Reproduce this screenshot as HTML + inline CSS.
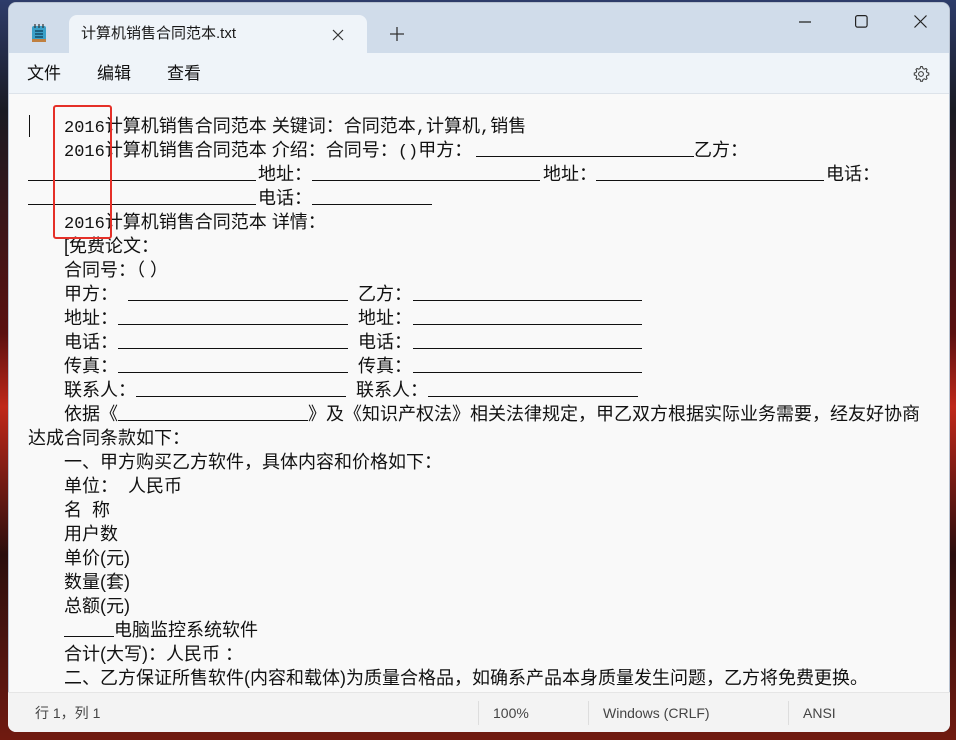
<!DOCTYPE html>
<html><head><meta charset="utf-8"><style>
*{margin:0;padding:0;box-sizing:border-box}
body{width:956px;height:740px;overflow:hidden;background:#1b2233;position:relative;font-family:"Liberation Sans","Noto Sans CJK SC",sans-serif;color:#111}
.desk{position:absolute;left:0;top:0;width:956px;height:740px;background:linear-gradient(180deg,#2d3c6a 0%,#1a1a22 15%,#5a1010 45%,#c0281a 55%,#2a0e0e 75%,#701a10 100%)}
.win{position:absolute;left:8px;top:2px;width:942px;height:730px;background:#f9f9f9;border-radius:8px;overflow:hidden;border:1px solid #b8c2d0}
.title{position:absolute;left:0;top:0;width:100%;height:50px;background:#d0dcea}
.tab{position:absolute;left:60px;top:12px;width:298px;height:40px;background:#eff4f9;border-radius:8px 8px 0 0;font-size:15px;line-height:38px;padding-left:12px;color:#1a1a1a}
.menu{position:absolute;left:0;top:50px;width:100%;height:41px;background:#eff4f9;border-bottom:1px solid #dde3ea;font-size:17px;line-height:42px}
.menu span{position:absolute}
.sep{position:absolute;top:8px;width:1px;height:24px;background:#ddd}
.l{position:absolute;font-size:18px;line-height:24px;white-space:pre;height:24px}
.r{position:absolute;left:0;top:0;width:956px;height:24px}
.r span,.r i{position:absolute;top:0;font-style:normal;font-size:18px;line-height:24px;white-space:pre}
.u{display:inline-block;border-bottom:1px solid #111;height:19px}
.r i.u{height:19px}
m{font-family:"Liberation Mono",monospace;font-size:17px}
</style></head><body>
<div class="desk"></div>
<div class="win">
 <div class="title">
  <svg style="position:absolute;left:22px;top:20px" width="16" height="20" viewBox="0 0 16 20"><rect x="1" y="3" width="14" height="16" rx="2" fill="#3aa0c8"/><rect x="1" y="16" width="14" height="3" fill="#c08040"/><path d="M4 8h8M4 11h8M4 14h8" stroke="#0b3a55" stroke-width="1.3"/><path d="M4 1v4M8 1v4M12 1v4" stroke="#333" stroke-width="1.2"/></svg>
  <div class="tab">计算机销售合同范本.txt
   <svg style="position:absolute;left:263px;top:14px" width="12" height="12"><path d="M1 1L11 11M11 1L1 11" stroke="#333" stroke-width="1.2"/></svg>
  </div>
  <svg style="position:absolute;left:381px;top:24px" width="14" height="14"><path d="M7 0v14M0 7h14" stroke="#333" stroke-width="1.3"/></svg>
  <svg style="position:absolute;left:790px;top:18px" width="12" height="2"><path d="M0 1h12" stroke="#222" stroke-width="1.2"/></svg>
  <svg style="position:absolute;left:846px;top:12px" width="13" height="13"><rect x=".6" y=".6" width="11.5" height="11.5" rx="2" fill="none" stroke="#222" stroke-width="1.2"/></svg>
  <svg style="position:absolute;left:905px;top:12px" width="13" height="13"><path d="M.5 .5L12.5 12.5M12.5 .5L.5 12.5" stroke="#222" stroke-width="1.2"/></svg>
 </div>
 <div class="menu"><span style="left:18px">文件</span><span style="left:88px">编辑</span><span style="left:158px">查看</span>
  <svg style="position:absolute;left:903px;top:12px" width="18" height="18" viewBox="0 0 24 24"><path d="M12 2l2 .3.6 2.4 1.8.9 2.3-1 1.4 1.4-1 2.3.9 1.8 2.4.6v2.6l-2.4.6-.9 1.8 1 2.3-1.4 1.4-2.3-1-1.8.9-.6 2.4h-2.6l-.6-2.4-1.8-.9-2.3 1-1.4-1.4 1-2.3-.9-1.8-2.4-.6v-2.6l2.4-.6.9-1.8-1-2.3 1.4-1.4 2.3 1 1.8-.9.6-2.4z" fill="none" stroke="#333" stroke-width="1.3"/><circle cx="12" cy="12" r="3.2" fill="none" stroke="#333" stroke-width="1.3"/></svg>
 </div>
 <div style="position:absolute;left:20px;top:112px;width:1px;height:22px;background:#111"></div>
</div>
<div class="l" style="left:64px;top:114px"><m>2016</m>计算机销售合同范本 关键词：合同范本<m>,</m>计算机<m>,</m>销售</div>
<div class="r" style="top:138px"><span style="left:64px"><m>2016</m>计算机销售合同范本 介绍：合同号：<m>()</m>甲方：</span><i class="u" style="left:476px;width:218px"></i><span style="left:694px">乙方：</span></div>
<div class="r" style="top:162px"><i class="u" style="left:28px;width:228px"></i><span style="left:258px">地址：</span><i class="u" style="left:312px;width:228px"></i><span style="left:543px">地址：</span><i class="u" style="left:596px;width:228px"></i><span style="left:826px">电话：</span></div>
<div class="r" style="top:186px"><i class="u" style="left:28px;width:228px"></i><span style="left:258px">电话：</span><i class="u" style="left:312px;width:120px"></i></div>
<div class="l" style="left:64px;top:210px"><m>2016</m>计算机销售合同范本 详情：</div>
<div class="l" style="left:64px;top:234px">[免费论文：</div>
<div class="l" style="left:64px;top:258px">合同号：（ ）</div>
<div class="r" style="top:282px"><span style="left:64px">甲方：</span><i class="u" style="left:128px;width:220px"></i><span style="left:358px">乙方：</span><i class="u" style="left:413px;width:229px"></i></div>
<div class="r" style="top:306px"><span style="left:64px">地址：</span><i class="u" style="left:118px;width:230px"></i><span style="left:358px">地址：</span><i class="u" style="left:413px;width:229px"></i></div>
<div class="r" style="top:330px"><span style="left:64px">电话：</span><i class="u" style="left:118px;width:230px"></i><span style="left:358px">电话：</span><i class="u" style="left:413px;width:229px"></i></div>
<div class="r" style="top:354px"><span style="left:64px">传真：</span><i class="u" style="left:118px;width:230px"></i><span style="left:358px">传真：</span><i class="u" style="left:413px;width:229px"></i></div>
<div class="r" style="top:378px"><span style="left:64px">联系人：</span><i class="u" style="left:136px;width:210px"></i><span style="left:356px">联系人：</span><i class="u" style="left:428px;width:210px"></i></div>
<div class="r" style="top:402px"><span style="left:64px">依据《</span><i class="u" style="left:118px;width:190px"></i><span style="left:308px">》及《知识产权法》相关法律规定，甲乙双方根据实际业务需要，经友好协商</span></div>
<div class="l" style="left:28px;top:426px">达成合同条款如下：</div>
<div class="l" style="left:64px;top:450px">一、甲方购买乙方软件，具体内容和价格如下：</div>
<div class="l" style="left:64px;top:474px">单位：  人民币</div>
<div class="l" style="left:64px;top:498px">名  称</div>
<div class="l" style="left:64px;top:522px">用户数</div>
<div class="l" style="left:64px;top:546px">单价(元)</div>
<div class="l" style="left:64px;top:570px">数量(套)</div>
<div class="l" style="left:64px;top:594px">总额(元)</div>
<div class="r" style="top:618px"><i class="u" style="left:64px;width:50px"></i><span style="left:114px">电脑监控系统软件</span></div>
<div class="l" style="left:64px;top:642px">合计(大写)：人民币 ：</div>
<div class="l" style="left:64px;top:666px">二、乙方保证所售软件(内容和载体)为质量合格品，如确系产品本身质量发生问题，乙方将免费更换。</div>
<div style="position:absolute;left:8px;top:692px;width:942px;height:40px;background:#f3f3f3;border-top:1px solid #e5e5e5;border-radius:0 0 8px 8px;font-size:14px;line-height:40px;color:#444">
 <span style="position:absolute;left:27px">行 1，列 1</span>
 <div class="sep" style="left:470px"></div><span style="position:absolute;left:485px">100%</span>
 <div class="sep" style="left:580px"></div><span style="position:absolute;left:595px">Windows (CRLF)</span>
 <div class="sep" style="left:780px"></div><span style="position:absolute;left:795px">ANSI</span>
</div>
<div style="position:absolute;left:53px;top:105px;width:59px;height:134px;border:2px solid #e53028;border-radius:3px"></div>
</body></html>
